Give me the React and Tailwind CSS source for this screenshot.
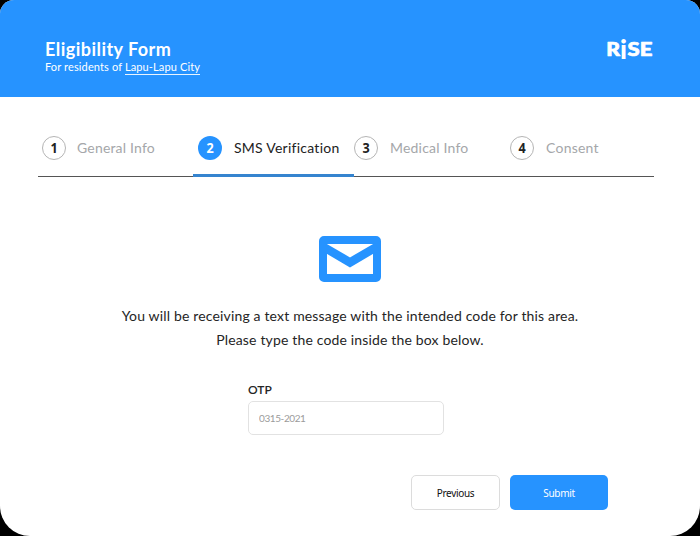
const steps = [
  { n: 1, label: "General Info", width: "w-[155px]", pad: "pl-[4px]", gap: "ml-[11px]", spacing: "tracking-[0.18px]" },
  { n: 2, label: "SMS Verification", width: "w-[161px]", pad: "pl-[5px]", gap: "ml-[12px]", active: true, spacing: "tracking-[0.25px]" },
  { n: 3, label: "Medical Info", width: "w-[156px]", pad: "pl-0", gap: "ml-[12px]", spacing: "tracking-[0.2px]" },
  { n: 4, label: "Consent", width: "w-[144px]", pad: "pl-0", gap: "ml-[12px]", spacing: "tracking-[0.24px]" },
];

function Logo() {
  return (
    <svg width="48" height="34" viewBox="0 0 48 34" className="block overflow-visible" fill="white" stroke="white" strokeLinejoin="round" strokeWidth="0.7" style={{ fontFamily: "Lato, sans-serif", fontWeight: 900 }}>
      <text x="0.2" y="20.4" fontSize="18.5" textLength="13.8" lengthAdjust="spacingAndGlyphs">R</text>
      <text x="13.9" y="22.8" fontSize="26" textLength="7" lengthAdjust="spacingAndGlyphs" strokeWidth="0">i</text>
      <text x="21.6" y="20.4" fontSize="18.5" textLength="24.8" lengthAdjust="spacingAndGlyphs">SE</text>
    </svg>
  );
}

function Step({ n, label, width, pad, gap, active, spacing }) {
  return (
    <li className={`flex h-[53px] pt-[12px] ${width} ${pad} ${active ? "border-b-[3px] border-[#3584cf]" : "border-b border-[#555]"}`}>
      <span className={`flex h-6 w-6 shrink-0 items-center justify-center rounded-full font-['Noto_Sans'] text-[14px] font-bold leading-none ${active ? "bg-[#2693ff] text-white" : "border border-[#b5b5b5] text-[#222]"}`}>
        <span className="scale-x-90">{n}</span>
      </span>
      <span className={`whitespace-nowrap text-[14px] leading-6 ${gap} ${spacing} ${active ? "text-[#222]" : "text-[#a5a7aa]"}`}>{label}</span>
    </li>
  );
}

export default function App() {
  return (
    <div className="h-[536px] w-[700px] bg-black font-[Lato,sans-serif]">
      <main className="flex h-full flex-col overflow-hidden rounded-t-[14px] rounded-b-[30px] bg-white">
        <header className="flex h-[97px] shrink-0 justify-between bg-[#2693ff] pl-[45px] pr-[46px] pt-[36px] text-white">
          <div>
            <h1 className="pt-[2px] text-[18px] font-bold leading-[22px] tracking-[0.46px]">Eligibility Form</h1>
            <p className="whitespace-nowrap text-[11px] leading-[14px] tracking-[0.13px]">
              For residents of <span className="inline-block border-b border-white/90">Lapu-Lapu City</span>
            </p>
          </div>
          <Logo />
        </header>
        <ol className="ml-[38px] mt-[27px] flex w-[616px]">
          {steps.map((s) => <Step key={s.n} {...s} />)}
        </ol>
        <section className="flex flex-col items-center pt-[59px]">
          <svg width="62" height="46" viewBox="0 0 62 46" className="block" fill="none" stroke="#2693ff">
            <rect x="4" y="4" width="54" height="38" rx="1" strokeWidth="8" strokeLinejoin="round" />
            <path d="M4 10.6 31 26.4 58 10.6" strokeWidth="8.6" />
          </svg>
          <p className="mt-[22px] whitespace-nowrap text-center text-[14px] leading-6 tracking-[0.16px] text-[#252525]">
            You will be receiving a text message with the intended code for this area.<br />
            Please type the code inside the box below.
          </p>
        </section>
        <label className="ml-[248px] mt-[30px] flex w-[196px] flex-col">
          <span className="text-[12px] font-semibold leading-[16px] text-[#252525]">OTP</span>
          <input className="mt-[3px] h-[34px] rounded-[5px] border border-[#e2e2e2] px-[10px] text-[10px] tracking-[-0.4px] outline-none placeholder:text-[#9b9b9b]" placeholder="0315-2021" />
        </label>
        <div className="ml-[411px] mt-[40px] flex gap-[10px] font-['Noto_Sans'] text-[10px] tracking-[-0.3px]">
          <button className="h-[35px] w-[89px] rounded-[5px] border border-[#dcdcdc] pt-[2px] text-[#111]">Previous</button>
          <button className="h-[35px] w-[98px] rounded-[5px] bg-[#2693ff] pt-[2px] text-white">Submit</button>
        </div>
      </main>
    </div>
  );
}
